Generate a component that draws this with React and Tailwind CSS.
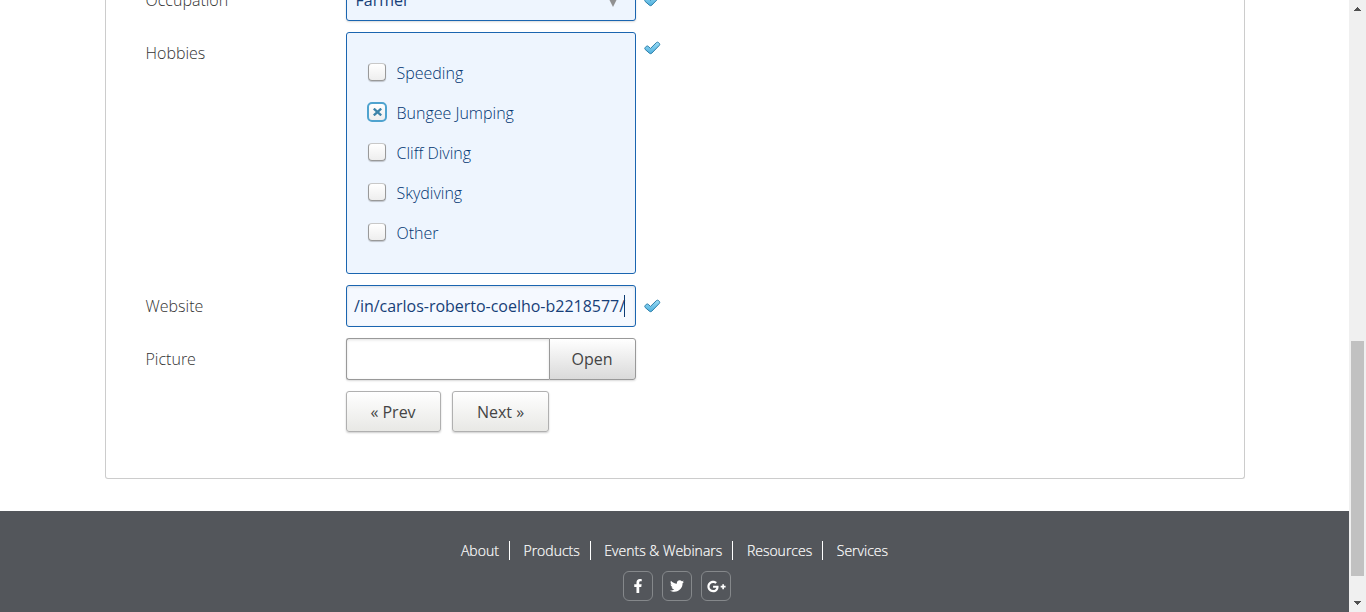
import { FaFacebookF, FaTwitter, FaGooglePlusG } from "react-icons/fa";

function Check({ low }) {
  return (
    <svg className={(low ? "mt-[14px]" : "mt-[9px]") + " ml-2 h-[14px] w-[17px] shrink-0"} viewBox="0 0 17 14">
      <defs>
        <linearGradient id="tick" x1="0" y1="0" x2="0" y2="1">
          <stop offset="0" stopColor="#9bdcf5" />
          <stop offset="1" stopColor="#4fb0de" />
        </linearGradient>
      </defs>
      <path
        d="M1 6.8 L2.3 5.3 Q3.2 4.5 4.2 5.3 L6.5 7.4 L12.4 1.6 Q13.5 .7 14.6 1.6 L15.4 2.4 Q16.2 3.4 15.3 4.4 L7.8 12.2 Q6.6 13.2 5.4 12.2 L1.1 8.4 Q.4 7.6 1 6.8Z"
        fill="url(#tick)"
        stroke="#2f80aa"
        strokeWidth="1"
      />
    </svg>
  );
}

function Row({ label, children, valid, low }) {
  return (
    <div className="flex items-start">
      <div className="-ml-[0.5px] w-[200.5px] shrink-0 pt-[9px] font-light leading-6 text-[#333]">{label}</div>
      {children}
      {valid && <Check low={low} />}
    </div>
  );
}

function Hobby({ label, checked }) {
  return (
    <label className="flex h-10 items-center">
      {checked ? (
        <span className="-mx-px flex size-5 items-center justify-center rounded-[5px] border-2 border-[#4fa3cf] bg-linear-to-b from-white to-[#eee]">
          <svg className="h-2 w-[9px]" viewBox="0 0 9 8" stroke="#3c83a8" strokeWidth="2.3">
            <path d="M.8 .6 8.2 7.4M8.2 .6 .8 7.4" />
          </svg>
        </span>
      ) : (
        <span className="size-[18px] rounded-[4px] border border-[#999] border-t-[#c8c8c8] bg-linear-to-b from-white to-[#eee] shadow-[0_1px_1px_rgba(0,0,0,0.2)]" />
      )}
      <span className="ml-[10.5px] pt-0.5 font-light leading-6 text-[#003471]">{label}</span>
    </label>
  );
}

const hobbies = ["Speeding", "Bungee Jumping", "Cliff Diving", "Skydiving", "Other"];
const links = ["About", "Products", "Events & Webinars", "Resources", "Services"];
const social = [
  { Icon: FaFacebookF, cls: "size-[14px]" },
  { Icon: FaTwitter, cls: "size-[14px]" },
  { Icon: FaGooglePlusG, cls: "size-[19px]" },
];

const button =
  "flex h-[41px] items-center justify-center rounded-[3px] border border-[#b0b0b0] bg-linear-to-b from-white to-[#e8e8e5] text-[#444] shadow-[0_1px_2px_rgba(0,0,0,0.2)]";

export default function App() {
  return (
    <div className="flex h-[612px] w-[1366px] overflow-hidden bg-white font-['Open_Sans',sans-serif] text-base">
      <div className="flex min-w-0 flex-1 flex-col overflow-hidden">
        <main className="-mt-[21px] ml-[105px] flex h-[500px] w-[1140px] shrink-0 flex-col gap-[11px] rounded-b-[3px] border border-t-0 border-[#ccc] pl-10">
          <Row label="Occupation" valid low>
            <div className="flex h-[42px] w-[290px] items-center justify-between rounded-[3px] border border-[#1a65b0] bg-[#eef5fe] pl-[8.5px] pr-[17px] text-[#173f78] shadow-[0_1px_2px_rgba(0,0,0,0.15)]">
              <span>Farmer</span>
              <svg className="mt-1 h-[10px] w-[10px]" viewBox="0 0 10 10">
                <path d="M0 0H10L5 10Z" fill="#919191" />
              </svg>
            </div>
          </Row>
          <Row label="Hobbies" valid>
            <div className="h-[242px] w-[290px] rounded-[3px] border border-[#1a65b0] bg-[#eef5fe] pl-[21px] pt-[19px]">
              {hobbies.map((h, i) => (
                <Hobby key={h} label={h} checked={i === 1} />
              ))}
            </div>
          </Row>
          <Row label="Website" valid low>
            <div className="flex h-[42px] w-[290px] items-center justify-end overflow-hidden whitespace-nowrap rounded-[3px] border border-[#1a65b0] bg-[#f5f9ff] pr-[10px] text-[#173f78] shadow-[inset_0_1px_3px_rgba(0,0,0,0.12)]">
              <span className="tracking-[-0.02px]">/in/carlos-roberto-coelho-b2218577/</span>
              <span className="-ml-px h-[22px] w-px bg-[#0d3c73]" />
            </div>
          </Row>
          <Row label="Picture">
            <div className="flex h-[42px] w-[290px] rounded-[3px] shadow-[0_1px_2px_rgba(0,0,0,0.15)]">
              <div className="w-[203px] rounded-l-[3px] border border-r-0 border-[#999] bg-white shadow-[inset_0_1px_3px_rgba(0,0,0,0.12)]" />
              <div className="flex flex-1 items-center justify-center rounded-r-[3px] border border-[#999] bg-linear-to-b from-white to-[#dadada] pr-px text-[#444]">
                Open
              </div>
            </div>
          </Row>
          <Row label="">
            <div className="flex gap-[11px]">
              <div className={button + " w-[95px]"}>
                <span className="pt-px pr-px">« Prev</span>
              </div>
              <div className={button + " w-[97px]"}>
                <span className="pt-px">Next »</span>
              </div>
            </div>
          </Row>
        </main>
        <footer className="mt-8 flex flex-1 flex-col items-center bg-[#53565b] pt-[30px] text-white">
          <nav className="flex h-[19px] text-sm font-light leading-[19px] [-webkit-text-stroke:0.2px_white]">
            {links.map((l, i) => (
              <span
                key={l}
                className={
                  i < links.length - 1
                    ? "mr-[13.6px] border-r border-white pr-[10px]"
                    : ""
                }
              >
                {l}
              </span>
            ))}
          </nav>
          <div className="mt-[11px] ml-[5px] flex gap-[9px]">
            {social.map(({ Icon, cls }, i) => (
              <span
                key={i}
                className="flex size-[30px] items-center justify-center rounded-[6px] border border-[#85888b]"
              >
                <Icon className={cls} />
              </span>
            ))}
          </div>
        </footer>
      </div>
      <div className="flex w-[17px] shrink-0 flex-col items-center bg-[#f0f0f0]">
        <svg className="mt-[7px] h-1 w-[7px]" viewBox="0 0 7 4" shapeRendering="crispEdges">
          <path d="M3 0h1v1h1v1h1v1h1v1H0V3h1V2h1V1h1Z" fill="#505050" />
        </svg>
        <div className="mt-[330px] h-[235px] w-[13px] bg-[#c1c1c1]" />
        <svg className="mt-[25px] h-1 w-[7px]" viewBox="0 0 7 4" shapeRendering="crispEdges">
          <path d="M0 0h7v1H6v1H5v1H4v1H3V3H2V2H1V1H0Z" fill="#505050" />
        </svg>
      </div>
    </div>
  );
}
